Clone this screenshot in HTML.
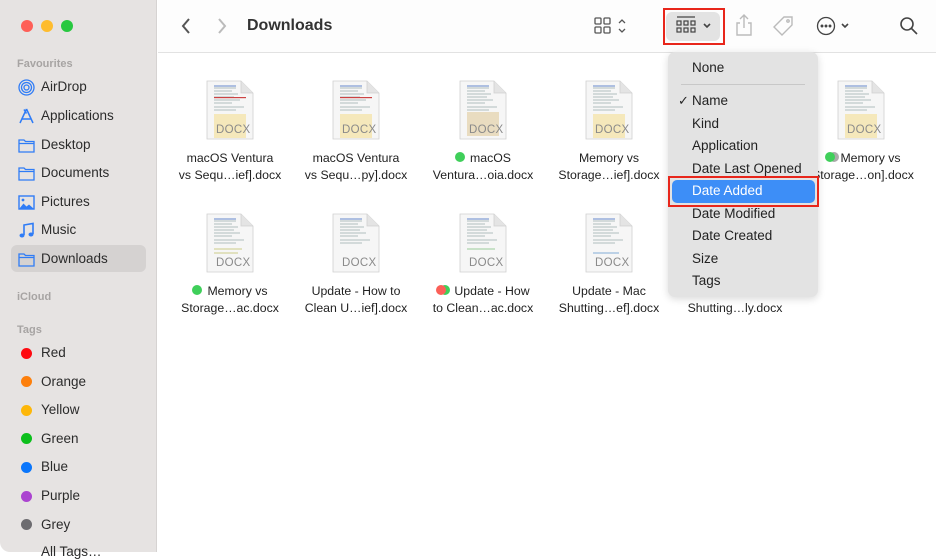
<!DOCTYPE html>
<html><head><meta charset="utf-8">
<style>
*{margin:0;padding:0;box-sizing:border-box}
body{width:936px;height:552px;overflow:hidden;background:#fff;font-family:"Liberation Sans",sans-serif;position:relative;color:#262626}
.abs{position:absolute}
#side{left:0;top:0;width:157px;height:552px;background:#e6e3e2;border-right:1px solid #d6d3d2;border-radius:0 0 0 10px}
.hd{position:absolute;left:17px;font-size:11px;font-weight:bold;color:#a7a4a3}
.si{position:absolute;left:41px;font-size:13.5px;color:#2b2b2b}
.ic{position:absolute;left:18px;width:17px;height:17px}
.dot{position:absolute;left:21px;width:11px;height:11px;border-radius:50%}
#tb{left:158px;top:0;width:778px;height:53px;border-bottom:1px solid #e2e2e2;background:#fdfdfd}
.fl{position:absolute;width:126px;text-align:center;font-size:12.3px;line-height:17px;color:#222}
.doc{position:absolute;width:48px;height:60px}
.dx{position:absolute;font-size:11.5px;color:#8a8a8a;letter-spacing:.3px}
.menu{left:668px;top:52px;width:150px;height:245px;background:#e3e3e3;border-radius:7px;box-shadow:0 2px 8px rgba(0,0,0,.15)}
.mi{position:absolute;left:24px;font-size:13.5px;color:#222}
</style></head><body>
<div id="side" class="abs">
 <div class="abs" style="left:21px;top:20px;width:12px;height:12px;border-radius:50%;background:#fe5f57"></div>
 <div class="abs" style="left:41px;top:20px;width:12px;height:12px;border-radius:50%;background:#febc2e"></div>
 <div class="abs" style="left:61px;top:20px;width:12px;height:12px;border-radius:50%;background:#28c840"></div>
 <div class="hd" style="top:58px">Favourites</div>
 <div class="abs" style="left:11px;top:245px;width:135px;height:27px;background:#d5d2d1;border-radius:6px"></div>
 <svg class="ic" style="top:79px" viewBox="0 0 17 17" fill="none" stroke="#2f7cf6" stroke-width="1.3"><circle cx="8.5" cy="8.5" r="7.5"/><circle cx="8.5" cy="8.5" r="5"/><circle cx="8.5" cy="8.5" r="2.5"/></svg>
 <svg class="ic" style="top:108px" viewBox="0 0 17 17" fill="none" stroke="#2f7cf6" stroke-width="1.5"><path d="M8.5 1L2 15M8.5 1l6.5 14M4 11h9M6 1.5l2.5 4"/></svg>
 <svg class="ic" style="top:137px" viewBox="0 0 17 17" fill="none" stroke="#2f7cf6" stroke-width="1.3"><path d="M1 3h5l1.5 1.5H16V15H1z M1 6.5h15"/></svg>
 <svg class="ic" style="top:165px" viewBox="0 0 17 17" fill="none" stroke="#2f7cf6" stroke-width="1.3"><path d="M1 3h5l1.5 1.5H16V15H1z M1 6.5h15"/></svg>
 <svg class="ic" style="top:194px" viewBox="0 0 17 17"><rect x="1" y="2" width="15" height="13" fill="none" stroke="#2f7cf6" stroke-width="1.4"/><path d="M1.5 14.5l4-5 3 3 2.5-2 4.5 4z" fill="#2f7cf6"/><circle cx="5" cy="6" r="1.4" fill="#2f7cf6"/></svg>
 <svg class="ic" style="top:222px" viewBox="0 0 17 17"><path d="M6 13V3l9-1.5V12" fill="none" stroke="#2f7cf6" stroke-width="1.6"/><ellipse cx="4" cy="13.5" rx="2.5" ry="2" fill="#2f7cf6"/><ellipse cx="13" cy="12.5" rx="2.5" ry="2" fill="#2f7cf6"/></svg>
 <svg class="ic" style="top:251px" viewBox="0 0 17 17" fill="none" stroke="#2f7cf6" stroke-width="1.3"><path d="M1 3h5l1.5 1.5H16V15H1z M1 6.5h15"/></svg>
 <div class="si" style="top:79px">AirDrop</div>
 <div class="si" style="top:108px">Applications</div>
 <div class="si" style="top:137px">Desktop</div>
 <div class="si" style="top:165px">Documents</div>
 <div class="si" style="top:194px">Pictures</div>
 <div class="si" style="top:222px">Music</div>
 <div class="si" style="top:251px">Downloads</div>
 <div class="hd" style="top:291px">iCloud</div>
 <div class="hd" style="top:324px">Tags</div>
 <div class="dot" style="top:348px;background:#fe0a10"></div><div class="si" style="top:345px">Red</div>
 <div class="dot" style="top:376px;background:#fd7f0b"></div><div class="si" style="top:374px">Orange</div>
 <div class="dot" style="top:405px;background:#fdb709"></div><div class="si" style="top:402px">Yellow</div>
 <div class="dot" style="top:433px;background:#0cbf1c"></div><div class="si" style="top:431px">Green</div>
 <div class="dot" style="top:462px;background:#0a76fb"></div><div class="si" style="top:459px">Blue</div>
 <div class="dot" style="top:491px;background:#ab44d0"></div><div class="si" style="top:488px">Purple</div>
 <div class="dot" style="top:519px;background:#6d6c70"></div><div class="si" style="top:517px">Grey</div>
 <div class="si" style="top:544px">All Tags…</div>
</div>

<div id="tb" class="abs">
 <svg class="abs" style="left:22px;top:17px" width="12" height="18" viewBox="0 0 12 18" fill="none" stroke="#555" stroke-width="2"><path d="M9 2L3 9l6 7"/></svg>
 <svg class="abs" style="left:58px;top:17px" width="12" height="18" viewBox="0 0 12 18" fill="none" stroke="#bbb" stroke-width="2"><path d="M3 2l6 7-6 7"/></svg>
 <div class="abs" style="left:89px;top:17px;font-size:16px;font-weight:bold;color:#333">Downloads</div>
 <svg class="abs" style="left:436px;top:17px" width="36" height="18" viewBox="0 0 36 18" fill="none" stroke="#555" stroke-width="1.3"><rect x="1" y="1" width="6" height="6" rx="1"/><rect x="10" y="1" width="6" height="6" rx="1"/><rect x="1" y="10" width="6" height="6" rx="1"/><rect x="10" y="10" width="6" height="6" rx="1"/><path d="M25 6l3-3 3 3M25 12l3 3 3-3"/></svg>
 <div class="abs" style="left:508px;top:12px;width:54px;height:29px;background:#e3e3e3;border-radius:6px"></div>
 <div class="abs" style="left:505px;top:8px;width:62px;height:37px;border:2px solid #e8261b"></div>
 <svg class="abs" style="left:518px;top:16px" width="40" height="20" viewBox="0 0 40 20" fill="none" stroke="#444" stroke-width="1.2"><path d="M1 1h18"/><rect x="1" y="5" width="4" height="4"/><rect x="8" y="5" width="4" height="4"/><rect x="15" y="5" width="4" height="4"/><rect x="1" y="12" width="4" height="4"/><rect x="8" y="12" width="4" height="4"/><rect x="15" y="12" width="4" height="4"/><path d="M28 8l3 3 3-3" stroke-width="1.6"/></svg>
 <svg class="abs" style="left:577px;top:14px" width="18" height="22" viewBox="0 0 18 22" fill="none" stroke="#bbb" stroke-width="1.4"><path d="M9 1v13M5 5l4-4 4 4M5 9H2v12h14V9h-3"/></svg>
 <svg class="abs" style="left:614px;top:15px" width="22" height="22" viewBox="0 0 22 22" fill="none" stroke="#bbb" stroke-width="1.4"><path d="M12 2h8v8L10 20 2 12z"/><circle cx="16" cy="6" r="1.2"/></svg>
 <svg class="abs" style="left:658px;top:16px" width="38" height="20" viewBox="0 0 38 20" fill="none" stroke="#444" stroke-width="1.3"><circle cx="10" cy="10" r="8.5"/><circle cx="6" cy="10" r=".8" fill="#444"/><circle cx="10" cy="10" r=".8" fill="#444"/><circle cx="14" cy="10" r=".8" fill="#444"/><path d="M26 8l3 3 3-3" stroke-width="1.6"/></svg>
 <svg class="abs" style="left:741px;top:16px" width="20" height="20" viewBox="0 0 20 20" fill="none" stroke="#444" stroke-width="1.6"><circle cx="8" cy="8" r="6"/><path d="M12.5 12.5L18 18"/></svg>
</div>

<svg width="0" height="0" style="position:absolute"><defs>
<g id="d">
<path d="M1 1h34l12 12v46H1z" fill="#f6f6f6" stroke="#d0d0d0" stroke-width=".8"/>
<path d="M35 1v12h12" fill="#e4e4e4" stroke="#d0d0d0" stroke-width=".8"/>
<g stroke="#9aa" stroke-width=".7"><path d="M8 8h22M8 11h18M8 14h24M8 17h20M8 20h26M8 23h18M8 27h30M8 30h22"/></g>
<path d="M8 6h22" stroke="#6688cc" stroke-width="1"/>
</g></defs></svg>

<svg class="doc" style="left:206px;top:80px" viewBox="0 0 48 60"><use href="#d"/><rect x="8" y="34" width="32" height="24" fill="#f5e8bb"/><rect x="8" y="17" width="32" height="1.2" fill="#c44"/></svg>
<svg class="doc" style="left:332px;top:80px" viewBox="0 0 48 60"><use href="#d"/><rect x="8" y="34" width="32" height="24" fill="#f5e8bb"/><rect x="8" y="17" width="32" height="1.2" fill="#c44"/></svg>
<svg class="doc" style="left:459px;top:80px" viewBox="0 0 48 60"><use href="#d"/><rect x="8" y="32" width="32" height="24" fill="#e9dcc0"/></svg>
<svg class="doc" style="left:585px;top:80px" viewBox="0 0 48 60"><use href="#d"/><rect x="8" y="34" width="32" height="24" fill="#f5e8bb"/></svg>
<svg class="doc" style="left:837px;top:80px" viewBox="0 0 48 60"><use href="#d"/><rect x="8" y="34" width="32" height="24" fill="#f5e8bb"/></svg>
<svg class="doc" style="left:206px;top:213px" viewBox="0 0 48 60"><use href="#d"/><path d="M8 36h28M8 40h24" stroke="#cc8" stroke-width="1"/></svg>
<svg class="doc" style="left:332px;top:213px" viewBox="0 0 48 60"><use href="#d"/></svg>
<svg class="doc" style="left:459px;top:213px" viewBox="0 0 48 60"><use href="#d"/><path d="M8 36h28" stroke="#9c9" stroke-width="1"/></svg>
<svg class="doc" style="left:585px;top:213px" viewBox="0 0 48 60"><use href="#d"/><path d="M8 40h26" stroke="#9bd" stroke-width="1.2"/></svg>

<div class="dx" style="left:216px;top:124px">DOCX</div>
<div class="dx" style="left:342px;top:124px">DOCX</div>
<div class="dx" style="left:469px;top:124px">DOCX</div>
<div class="dx" style="left:595px;top:124px">DOCX</div>
<div class="dx" style="left:847px;top:124px">DOCX</div>
<div class="dx" style="left:216px;top:257px">DOCX</div>
<div class="dx" style="left:342px;top:257px">DOCX</div>
<div class="dx" style="left:469px;top:257px">DOCX</div>
<div class="dx" style="left:595px;top:257px">DOCX</div>

<div class="fl" style="left:167px;top:150px">macOS Ventura<br>vs Sequ…ief].docx</div>
<div class="fl" style="left:293px;top:150px">macOS Ventura<br>vs Sequ…py].docx</div>
<div class="fl" style="left:420px;top:150px"><span style="display:inline-block;width:10px;height:10px;border-radius:50%;background:#3fcf5a;margin-right:5px"></span>macOS<br>Ventura…oia.docx</div>
<div class="fl" style="left:546px;top:150px">Memory vs<br>Storage…ief].docx</div>
<div class="fl" style="left:800px;top:150px;white-space:nowrap"><span style="display:inline-block;width:10px;height:10px;border-radius:50%;background:#3fcf5a;margin-right:5px;box-shadow:4px 0 0 #aaa"></span>Memory vs<br>Storage…on].docx</div>
<div class="fl" style="left:167px;top:283px"><span style="display:inline-block;width:10px;height:10px;border-radius:50%;background:#3fcf5a;margin-right:5px"></span>Memory vs<br>Storage…ac.docx</div>
<div class="fl" style="left:293px;top:283px">Update - How to<br>Clean U…ief].docx</div>
<div class="fl" style="left:420px;top:283px"><span style="display:inline-block;width:10px;height:10px;border-radius:50%;background:#fb5f57;margin-right:8px;box-shadow:4px 0 0 #3fcf5a"></span>Update - How<br>to Clean…ac.docx</div>
<div class="fl" style="left:546px;top:283px">Update - Mac<br>Shutting…ef].docx</div>
<div class="fl" style="left:672px;top:300px">Shutting…ly.docx</div>

<div class="abs menu">
 <div class="mi" style="top:8px">None</div>
 <div class="abs" style="left:13px;top:32px;width:124px;height:1px;background:#c8c8c8"></div>
 <div class="abs" style="left:10px;top:41px;font-size:13px">✓</div>
 <div class="mi" style="top:41px">Name</div>
 <div class="mi" style="top:64px">Kind</div>
 <div class="mi" style="top:86px">Application</div>
 <div class="mi" style="top:109px">Date Last Opened</div>
 <div class="abs" style="left:4px;top:128px;width:143px;height:23px;background:#3d8ef7;border-radius:5px"></div>
 <div class="mi" style="top:131px;color:#fff">Date Added</div>
 <div class="mi" style="top:154px">Date Modified</div>
 <div class="mi" style="top:176px">Date Created</div>
 <div class="mi" style="top:199px">Size</div>
 <div class="mi" style="top:221px">Tags</div>
</div>
<div class="abs" style="left:668px;top:176px;width:151px;height:31px;border:2px solid #e8261b"></div>
</body></html>
